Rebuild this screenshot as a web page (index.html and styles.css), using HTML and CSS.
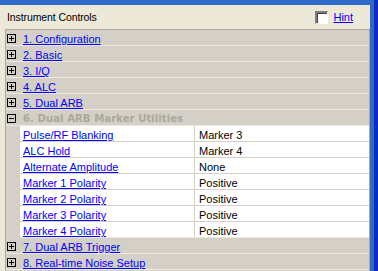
FILE: index.html
```html
<!DOCTYPE html>
<html>
<head>
<meta charset="utf-8">
<link rel="stylesheet" href="styles.css">
</head>
<body>
<div class="window">
  <div class="main">
    <div class="topbar"></div>
    <div class="header">
      <span class="title">Instrument Controls</span>
      <span class="hint"><span class="checkbox"></span><a class="link" href="#">Hint</a></span>
    </div>
    <div class="panel">
      <div class="row"><span class="box plus"></span><a class="link" href="#">1. Configuration</a></div>
      <div class="row"><span class="box plus"></span><a class="link" href="#">2. Basic</a></div>
      <div class="row"><span class="box plus"></span><a class="link" href="#">3. I/Q</a></div>
      <div class="row"><span class="box plus"></span><a class="link" href="#">4. ALC</a></div>
      <div class="row"><span class="box plus"></span><a class="link" href="#">5. Dual ARB</a></div>
      <div class="row"><span class="box minus"></span><span class="open">6. Dual ARB Marker Utilities</span></div>
      <div class="sub"><a class="link cell-l" href="#">Pulse/RF Blanking</a><span class="cell-v">Marker 3</span></div>
      <div class="sub"><a class="link cell-l" href="#">ALC Hold</a><span class="cell-v">Marker 4</span></div>
      <div class="sub"><a class="link cell-l" href="#">Alternate Amplitude</a><span class="cell-v">None</span></div>
      <div class="sub"><a class="link cell-l" href="#">Marker 1 Polarity</a><span class="cell-v">Positive</span></div>
      <div class="sub"><a class="link cell-l" href="#">Marker 2 Polarity</a><span class="cell-v">Positive</span></div>
      <div class="sub"><a class="link cell-l" href="#">Marker 3 Polarity</a><span class="cell-v">Positive</span></div>
      <div class="sub last"><a class="link cell-l" href="#">Marker 4 Polarity</a><span class="cell-v">Positive</span></div>
      <div class="row"><span class="box plus"></span><a class="link" href="#">7. Dual ARB Trigger</a></div>
      <div class="row"><span class="box plus"></span><a class="link" href="#">8. Real-time Noise Setup</a></div>
    </div>
  </div>
  <div class="edge"></div>
</div>
</body>
</html>
```
FILE: styles.css
```css
* { box-sizing: border-box; }
html, body { margin: 0; padding: 0; }
body {
  width: 378px;
  height: 271px;
  overflow: hidden;
  background: #ECE9D8;
  font-family: "Liberation Sans", Arial, sans-serif;
  font-size: 11px;
}
.window { display: flex; height: 271px; }
.main { flex: 1; display: flex; flex-direction: column; min-width: 0; }
.edge {
  width: 8px;
  background: linear-gradient(to right, #3169C6 0, #3169C6 4px, #0B2DC4 4px, #0B2DC4 8px);
}
.topbar { height: 5px; background: #3169C6; }
.header {
  height: 24px;
  display: flex;
  align-items: center;
  justify-content: space-between;
  padding: 0 17px 0 7px;
}
.title { color: #000; font-size: 10.5px; letter-spacing: -0.1px; }
.hint { display: flex; align-items: center; gap: 5px; }
.checkbox {
  width: 13px; height: 13px;
  background: #fff;
  border-top: 2px solid #808080;
  border-left: 2px solid #808080;
  border-right: 1px solid #fff;
  border-bottom: 1px solid #fff;
  box-shadow: inset 1px 1px 0 #404040;
}
.link { color: #0000FF; text-decoration: underline; }
.panel {
  flex: 1;
  margin-left: 5px;
  background: #D4D0C8;
  border-top: 1px solid #ACA899;
  border-left: 1px solid #ACA899;
  border-right: 1px solid #ACA899;
}
.row {
  height: 16px;
  display: flex;
  align-items: flex-start;
  border-bottom: 1px solid #ECE9D8;
  padding: 3px 0 0 1px;
  line-height: 12px;
}
.box {
  width: 9px; height: 9px;
  border: 1px solid #000;
  margin: 1px 7px 0 0;
  position: relative;
  flex: none;
}
.box::before {
  content: "";
  position: absolute;
  left: 1px; top: 3px;
  width: 5px; height: 1px;
  background: #000;
}
.plus::after {
  content: "";
  position: absolute;
  left: 3px; top: 1px;
  width: 1px; height: 5px;
  background: #000;
}
.open {
  color: #ACA899;
  font-weight: bold;
  font-family: "DejaVu Sans", Verdana, sans-serif;
  font-size: 10.2px;
}
.sub {
  height: 16px;
  margin-left: 14px;
  display: flex;
  background: #fff;
  border-bottom: 1px solid #D4D0C8;
  padding-top: 3px;
  line-height: 12px;
}
.sub.last { border-bottom-color: #ECE9D8; }
.cell-l {
  width: 175px;
  margin-top: -3px;
  padding: 3px 0 0 3px;
  border-right: 1px solid #D4D0C8;
}
.cell-v { padding-left: 4px; color: #000; }
```
